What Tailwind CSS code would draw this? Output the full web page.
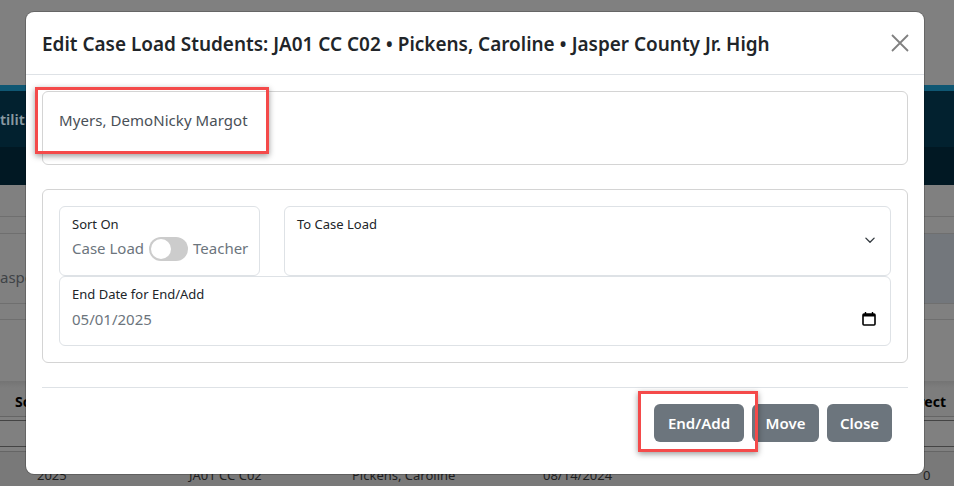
<!DOCTYPE html>
<html>
<head>
<meta charset="utf-8">
<script src="https://cdn.jsdelivr.net/npm/@tailwindcss/browser@4"></script>
</head>
<body class="m-0 overflow-hidden">
<div class="relative w-[954px] h-[486px] overflow-hidden bg-[#808080] font-['Noto_Sans','Open_Sans',sans-serif] flex flex-col">
  <!-- dimmed page behind the dialog -->
  <div class="h-[85px] shrink-0"></div>
  <div class="h-[6px] shrink-0 bg-[#0f5773]"></div>
  <div class="h-[56px] shrink-0 bg-[#02212f] flex items-center text-[15px] font-semibold text-[#8a9aa2] whitespace-nowrap">tilities</div>
  <div class="h-[38px] shrink-0 bg-[#011823]"></div>
  <div class="h-[32px] shrink-0 border-b border-[#6f6f6f]"></div>
  <div class="h-[17px] shrink-0 border-b border-[#6f6f6f]"></div>
  <div class="h-[69px] shrink-0 flex">
    <div class="w-[477px] flex items-center pt-[18px] text-[15px] text-[#3f4347] whitespace-nowrap"><span>asper</span></div>
    <div class="flex-1 bg-[#73777c]"></div>
  </div>
  <div class="h-[17px] shrink-0 border-y border-[#6f6f6f]"></div>
  <div class="h-[61px] shrink-0"></div>
  <div class="h-[36px] shrink-0 bg-[linear-gradient(#747474,#7d7d7d_20%)] flex justify-between items-center pl-[15px] pr-[8px] pt-[6px] text-[14px] font-bold text-black border-b border-[#656565]"><span>So</span><span>rect</span></div>
  <div class="h-[4px] shrink-0 border-b border-[#444]"></div>
  <div class="h-[26px] shrink-0 border-b border-[#444]"></div>
  <div class="h-[5px] shrink-0 border-b border-[#656565]"></div>
  <div class="flex-1 bg-[#797979] grid grid-cols-[189px_163px_191px_380px_1fr] pt-[14px] text-[13px] leading-[18px] text-[#1f1f1f] whitespace-nowrap">
    <span class="pl-[37px]">2025</span><span>JA01 CC C02</span><span>Pickens, Caroline</span><span>08/14/2024</span><span>0</span>
  </div>

  <!-- dialog -->
  <div class="absolute left-[26px] top-[12px] w-[898px] h-[462px] bg-white rounded-[8px] shadow-[0_0_0_1px_rgba(0,0,0,0.2)] flex flex-col text-[#212529]">
    <div class="h-[63px] shrink-0 border-b border-[#dee2e6] flex items-center justify-between pl-[16px] pr-[15px]">
      <h5 class="text-[18.95px] font-semibold m-0 pt-[2px] text-[#212529] whitespace-nowrap">Edit Case Load Students: JA01 CC C02 • Pickens, Caroline • Jasper County Jr. High</h5>
      <svg width="18" height="18" viewBox="0 0 18 18" class="text-[#808080]"><path d="M1 1l16 16M17 1L1 17" stroke="currentColor" stroke-width="1.8" fill="none"/></svg>
    </div>
    <div class="flex-1 flex flex-col px-[16px] pt-[16px]">
      <div class="h-[74px] shrink-0 border border-[#d4d4d4] rounded-[6px] pl-[16px] pt-[17px] text-[15px] leading-[22px] tracking-[0.06px] text-[#495057]">Myers, DemoNicky Margot</div>
      <div class="h-[174px] shrink-0 mt-[24px] border border-[#d4d4d4] rounded-[6px] pt-[16px] px-[16px] flex flex-col">
        <div class="flex gap-[24px] h-[70px] shrink-0">
          <div class="w-[201px] h-full border border-[#dee2e6] rounded-[6px] pl-[12px] pt-[8px]">
            <div class="text-[13px] leading-[18px] text-[#212529]">Sort On</div>
            <div class="flex items-center text-[15px] text-[#6c757d] h-[26px] mt-[2px] whitespace-nowrap">
              <span>Case Load</span>
              <span class="relative top-[1px] w-[39px] h-[24px] shrink-0 rounded-full bg-[#cccccc] ml-[5px] mr-[5px]"><span class="absolute left-[2px] top-[2px] w-[20px] h-[20px] rounded-full bg-white"></span></span>
              <span>Teacher</span>
            </div>
          </div>
          <div class="flex-1 h-full border border-[#dee2e6] rounded-[6px] pl-[12px] pr-[14px] pt-[8px] relative">
            <div class="text-[13px] leading-[18px] text-[#212529]">To Case Load</div>
            <svg class="absolute right-[14px] top-[27px]" width="12" height="12" viewBox="0 0 16 16"><path d="M2.5 5.5L8 11l5.5-5.5" stroke="#343a40" stroke-width="1.8" fill="none" stroke-linecap="round" stroke-linejoin="round"/></svg>
          </div>
        </div>
        <div class="h-[70px] shrink-0 border border-[#dee2e6] rounded-[6px] pl-[12px] pr-[14px] pt-[8px] relative">
          <div class="text-[13px] leading-[18px] text-[#212529]">End Date for End/Add</div>
          <div class="text-[15px] leading-[21px] text-[#6c757d] mt-[6px]">05/01/2025</div>
          <svg class="absolute right-[14px] top-[34px]" width="14" height="15" viewBox="0 0 14 15"><rect x="1" y="3" width="12" height="11" rx="1" fill="none" stroke="#000" stroke-width="1.6"/><path d="M1 3h12v2.5H1z" fill="#000"/><path d="M3.5 1v3M10.5 1v3" stroke="#000" stroke-width="1.4"/></svg>
        </div>
      </div>
      <div class="h-[25px] shrink-0 border-b border-[#dee2e6]"></div>
      <div class="flex justify-end gap-[8px] mt-[16px] pr-[16px]">
        <button class="h-[38px] w-[90px] rounded-[6px] bg-[#6c757d] text-white text-[15px] font-semibold">End/Add</button>
        <button class="h-[38px] w-[67px] rounded-[6px] bg-[#6c757d] text-white text-[15px] font-semibold">Move</button>
        <button class="h-[38px] w-[65px] rounded-[6px] bg-[#6c757d] text-white text-[15px] font-semibold">Close</button>
      </div>
    </div>
  </div>

  <!-- annotation rectangles -->
  <div class="absolute left-[35px] top-[87px] w-[234px] h-[67px] border-[3px] border-[#f44a4a] shadow-[0_2px_6px_rgba(0,0,0,0.4)]"></div>
  <div class="absolute left-[638px] top-[391px] w-[120px] h-[61px] border-[3px] border-[#f44a4a] shadow-[0_2px_6px_rgba(0,0,0,0.4)]"></div>
</div>
</body>
</html>
